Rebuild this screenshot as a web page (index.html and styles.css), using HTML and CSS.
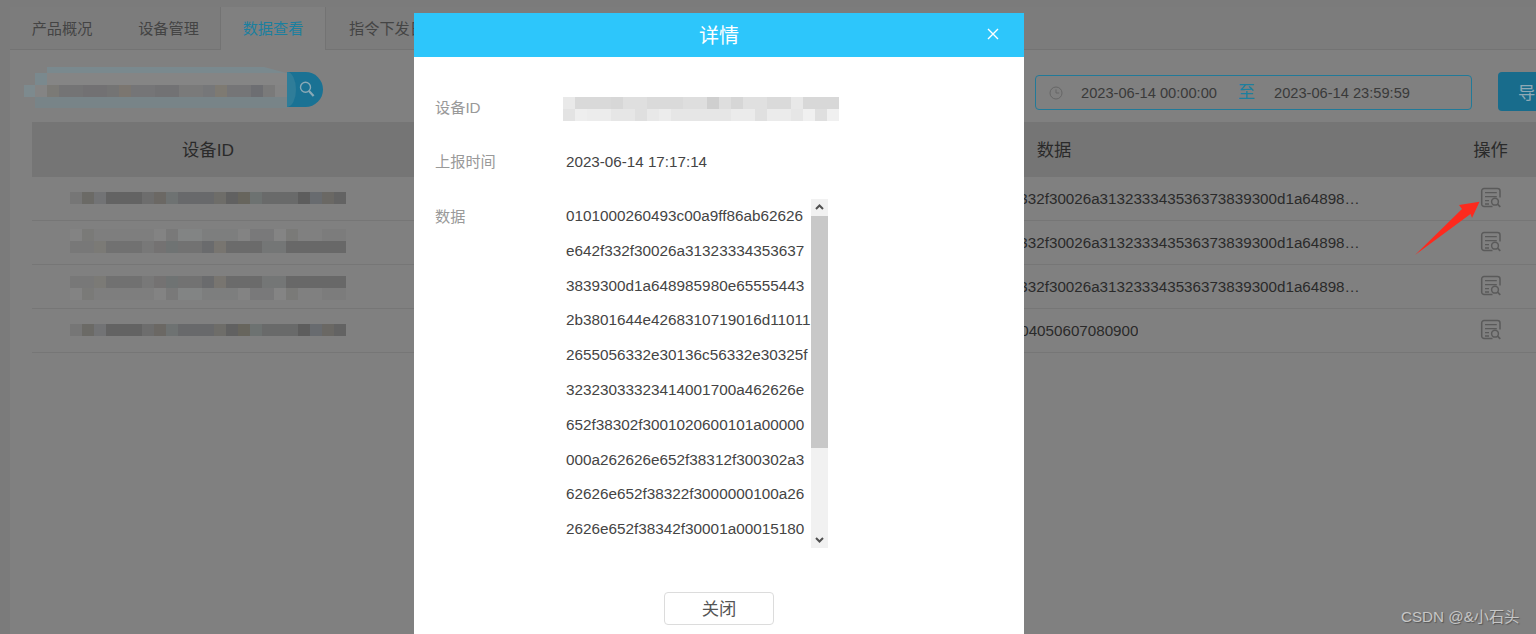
FILE: index.html
```html
<!DOCTYPE html>
<html lang="zh-CN">
<head>
<meta charset="utf-8">
<title>数据查看</title>
<link rel="stylesheet" href="styles.css">
</head>
<body>
<svg class="defs" width="0" height="0" aria-hidden="true">
  <symbol id="icon-view" viewBox="0 0 22 22">
    <path d="M20 10.5V4a2.4 2.4 0 0 0-2.4-2.4H4.1A2.4 2.4 0 0 0 1.7 4v13a2.4 2.4 0 0 0 2.4 2.4h8.4" fill="none" stroke="currentColor" stroke-width="1.5"/>
    <path d="M5 5.7h11.8M5 9.7h11.8M5 13.7h4M5 17h4" fill="none" stroke="currentColor" stroke-width="1.3"/>
    <circle cx="15" cy="14.7" r="3.4" fill="none" stroke="currentColor" stroke-width="1.5"/>
    <path d="M17.5 17.2l2.8 2.7" fill="none" stroke="currentColor" stroke-width="1.7"/>
  </symbol>
</svg>

<main class="page">
  <nav class="tabs">
    <a class="tab">产品概况</a>
    <a class="tab">设备管理</a>
    <a class="tab tab-active">数据查看</a>
    <a class="tab tab-last">指令下发日志</a>
  </nav>

  <section class="toolbar">
    <div class="search">
      <div class="search-field">
        <span class="mosaic-search"></span>
      </div>
      <button class="search-btn" aria-label="搜索">
        <svg width="20" height="20" viewBox="0 0 20 20"><circle cx="8.5" cy="8.2" r="5" fill="none" stroke="#8aa9b6" stroke-width="1.4"/><path d="M12 12l4.6 5" stroke="#8aa9b6" stroke-width="2.2"/></svg>
      </button>
    </div>
    <div class="range">
      <svg class="clock" width="14" height="14" viewBox="0 0 14 14"><circle cx="7" cy="7" r="6" fill="none" stroke="#666" stroke-width="1"/><path d="M7 3.4V7h3.2" fill="none" stroke="#666" stroke-width="1"/></svg>
      <span class="range-date">2023-06-14 00:00:00</span>
      <span class="range-to">至</span>
      <span class="range-date">2023-06-14 23:59:59</span>
    </div>
    <button class="export">导出</button>
  </section>

  <section class="table">
    <div class="thead">
      <div class="cell">设备ID</div>
      <div class="cell"></div>
      <div class="cell">数据</div>
      <div class="cell">操作</div>
    </div>
    <div class="row">
      <div class="cell"><span class="mosaic"><i class="m-dark"></i></span></div>
      <div class="cell"></div>
      <div class="cell data"><span class="clip">0101000260493c00a9ff86ab62626e642f332f30026a313233343536373839300d1a648985980e65555443</span></div>
      <div class="cell"><svg class="view"><use href="#icon-view"/></svg></div>
    </div>
    <div class="row">
      <div class="cell"><span class="mosaic mosaic-up"><i class="m-light"></i><i class="m-mid"></i></span></div>
      <div class="cell"></div>
      <div class="cell data"><span class="clip">0101000260493c00a9ff86ab62626e642f332f30026a313233343536373839300d1a648985980e65555443</span></div>
      <div class="cell"><svg class="view"><use href="#icon-view"/></svg></div>
    </div>
    <div class="row">
      <div class="cell"><span class="mosaic mosaic-down"><i class="m-mid"></i><i class="m-light"></i></span></div>
      <div class="cell"></div>
      <div class="cell data"><span class="clip">0101000260493c00a9ff86ab62626e642f332f30026a313233343536373839300d1a648985980e65555443</span></div>
      <div class="cell"><svg class="view"><use href="#icon-view"/></svg></div>
    </div>
    <div class="row">
      <div class="cell"><span class="mosaic"><i class="m-dark"></i></span></div>
      <div class="cell"></div>
      <div class="cell data"><span class="clip">01020304050607080900</span></div>
      <div class="cell"><svg class="view"><use href="#icon-view"/></svg></div>
    </div>
  </section>
</main>

<svg class="arrow" width="70" height="58" viewBox="0 0 70 58" aria-hidden="true">
  <polygon points="1,55 48,9 45,5 65.5,1.7 58,18 56.5,14" fill="#fc2a1e"/>
</svg>

<section class="modal" role="dialog">
  <header class="modal-head">
    <h2 class="modal-title">详情</h2>
    <svg class="modal-close" width="12" height="12" viewBox="0 0 12 12"><path d="M1 1l10 10M11 1L1 11" stroke="#fff" stroke-width="1.4"/></svg>
  </header>
  <div class="modal-body">
    <div class="field">
      <span class="field-label">设备ID</span>
      <span class="field-mosaic"></span>
    </div>
    <div class="field">
      <span class="field-label">上报时间</span>
      <span class="field-value">2023-06-14 17:17:14</span>
    </div>
    <div class="field field-data">
      <span class="field-label">数据</span>
      <div class="data-box">
        <div class="data-lines">
          <p>0101000260493c00a9ff86ab62626</p>
          <p>e642f332f30026a31323334353637</p>
          <p>3839300d1a648985980e65555443</p>
          <p>2b3801644e4268310719016d11011</p>
          <p>2655056332e30136c56332e30325f</p>
          <p>32323033323414001700a462626e</p>
          <p>652f38302f3001020600101a00000</p>
          <p>000a262626e652f38312f300302a3</p>
          <p>62626e652f38322f3000000100a26</p>
          <p>2626e652f38342f30001a00015180</p>
        </div>
        <div class="scrollbar">
          <svg class="sb-arrow" width="17" height="17" viewBox="0 0 17 17"><path d="M5 10l3.5-3.5L12 10" fill="none" stroke="#505050" stroke-width="2"/></svg>
          <div class="sb-track"><div class="sb-thumb"></div></div>
          <svg class="sb-arrow" width="17" height="17" viewBox="0 0 17 17"><path d="M5 7l3.5 3.5L12 7" fill="none" stroke="#505050" stroke-width="2"/></svg>
        </div>
      </div>
    </div>
    <div class="modal-foot"><button class="close-btn">关闭</button></div>
  </div>
</section>

<div class="watermark">CSDN @&amp;小石头</div>
</body>
</html>
```

FILE: styles.css
```css
* { box-sizing: border-box; }
html, body { margin: 0; height: 634px; overflow: hidden; }
body {
  background: #7b7b7b;
  color: #2a2a2a;
  font: 15.2px "Liberation Sans", "Noto Sans CJK SC", sans-serif;
  position: relative;
}
.defs { position: absolute; }

.page { margin-left: 10px; padding-top: 7px; height: 634px; background: linear-gradient(#7b7b7b 0 7px, #808080 7px); }

.tabs { display: flex; height: 43px; background: #7c7c7c; border-bottom: 1px solid #737373; }
.tab { flex: none; width: 106px; height: 43px; line-height: 43px; text-align: center; font-size: 15.2px; color: #444; white-space: nowrap; }
.tab:first-child { width: 104px; }
.tab:nth-child(2) { padding-left: 3px; }
.tab-active { background: #808080; color: #1c7f9f; border-left: 1px solid #737373; border-right: 1px solid #737373; }
.tab-last { width: auto; padding-left: 23px; border-left: 0; }

.toolbar { display: flex; align-items: flex-start; height: 72px; padding-top: 16px; }
.search { display: flex; align-items: flex-start; flex: none; width: 299px; height: 42px; margin-left: 14px; }
.search-field {
  position: relative; flex: none; width: 264px; height: 42px;
  background:
    linear-gradient(#7a898e, #7a898e) 11px 7px / 12px 12px no-repeat,
    linear-gradient(#7d8a8e, #7d8a8e) 0 19px / 11px 12px no-repeat,
    linear-gradient(#808080 0 1px, #7a898e 1px 7px, #858585 7px 19px, #848484 19px 31px, #788488 31px 42px);
  clip-path: polygon(0 19px, 11px 19px, 11px 7px, 23px 7px, 23px 1px, 240px 1px, 262px 7px, 264px 7px, 264px 42px, 11px 42px, 11px 31px, 0 31px);
}
.mosaic-search {
  display: block; position: absolute; left: 23px; top: 19px; width: 228px; height: 12px;
  background: linear-gradient(90deg, #7b7a76 0 12px, #747475 12px 36px, #727173 36px 60px, #747474 60px 72px, #7b7670 72px 84px, #757577 84px 108px, #727274 108px 132px, #7a7a7a 132px 156px, #767779 156px 168px, #7e7a72 168px 180px, #757577 180px 204px, #6d6e72 204px 216px, #7a7a7a 216px 228px);
}
.search-btn {
  position: relative; flex: none; width: 36px; height: 35px; margin-left: -1px; margin-top: 6px; padding: 0 0 2px 4px; border: 0;
  background: #1a7294; border-radius: 0 18px 18px 0;
  display: flex; align-items: center; justify-content: center;
}
.search-btn::before {
  content: ""; position: absolute; left: 0; top: 0; width: 9px; height: 35px;
  background: #2f7d99; border-radius: 0 9px 9px 0 / 0 18px 18px 0;
}
.range {
  display: flex; align-items: center; flex: none; width: 437px; height: 35px; margin-left: 712px; margin-top: 9px;
  border: 1px solid #217a99; border-radius: 4px; color: #3a3a3a; padding-left: 13px; font-size: 14.65px;
}
.clock { margin-right: 18px; flex: none; }
.range-date { white-space: nowrap; width: 137px; }
.range-to { color: #1c7f9f; font-size: 17px; margin: 0 19px 0 20px; line-height: 1; }
.export {
  flex: none; width: 60px; height: 39px; margin-left: 26px; margin-top: 6px; border: 0; background: #186c8c; border-radius: 4px 0 0 4px;
  color: #8fa9b5; font: 17.3px "Liberation Sans", "Noto Sans CJK SC", sans-serif; text-align: left; padding-left: 20px; white-space: nowrap; overflow: hidden;
}

.table { margin-left: 22px; }
.thead, .row { display: grid; grid-template-columns: 352px 279px 782px 91px; }
.thead { height: 55px; background: #757575; font-size: 17.3px; }
.thead .cell { padding-bottom: 3px; }
.row { height: 44px; border-bottom: 1px solid #767676; }
.cell { display: flex; align-items: center; justify-content: center; min-width: 0; }
.data { padding: 0 83px; }
.clip { display: block; max-width: 100%; overflow: hidden; white-space: nowrap; text-overflow: ellipsis; }
.view { width: 22px; height: 22px; color: #5a5a5a; margin-top: -1px; }

.mosaic { display: flex; flex-direction: column; width: 276px; margin-top: -1px; }
.mosaic-up { margin-top: -3px; }
.mosaic-down { margin-top: 3px; }
.mosaic i { display: block; height: 12px; }
.m-dark { background: linear-gradient(90deg, #767676 0 12px, #6b6a66 12px 24px, #727375 24px 36px, #636363 36px 72px, #6d6d6d 72px 84px, #6b6864 84px 96px, #6e7272 96px 108px, #68696b 108px 144px, #6e6d69 144px 156px, #616161 156px 168px, #67655d 168px 180px, #6d7271 180px 192px, #696a6a 192px 228px, #5d5d5d 228px 240px, #686b6f 240px 252px, #6a6864 252px 264px, #636363 264px 276px); }
.m-mid { background: linear-gradient(90deg, #787878 0 24px, #7b7a76 24px 36px, #717171 36px 72px, #787878 72px 84px, #747272 84px 96px, #6f7373 96px 108px, #727272 108px 132px, #6a6b6d 132px 144px, #787570 144px 156px, #6b6b6b 156px 192px, #747676 192px 216px, #686868 216px 276px); }
.m-light { background: linear-gradient(90deg, #838383 0 12px, #7a7a78 12px 24px, #7e7e7e 24px 84px, #838383 84px 96px, #797979 96px 108px, #828484 108px 132px, #7d7e7e 132px 168px, #838383 168px 180px, #79797a 180px 204px, #848484 204px 216px, #7a7a78 216px 228px, #808080 228px 252px, #7c7c7c 252px 276px); }

.arrow { position: absolute; left: 1414px; top: 200px; }

.modal { position: absolute; left: 414px; top: 13px; width: 610px; height: 640px; background: #fff; font-size: 15.2px; }
.modal-head { position: relative; height: 44px; padding-bottom: 2px; background: #2dc6fb; display: flex; align-items: center; justify-content: center; }
.modal-title { margin: 0; font-size: 20px; font-weight: 400; color: #fff; }
.modal-close { position: absolute; left: 573px; top: 15px; }
.modal-body { padding: 40px 0 0 21px; color: #444; }
.field { display: flex; align-items: center; height: 20px; margin-bottom: 34px; }
.field-label { width: 131px; margin-top: -2px; color: #999; flex: none; white-space: nowrap; }
.field-mosaic {
  display: block; width: 276px; height: 24px; margin: 4px 0 0 -3px;
  background:
    linear-gradient(90deg, #e9e9e9 0 12px, #d9d9d9 12px 48px, #d7d7d7 48px 60px, #dfdfdf 60px 84px, #dadada 84px 120px, #dedede 120px 144px, #cfcfcf 144px 156px, #dedede 156px 168px, #d6d6d6 168px 180px, #e0e0e0 180px 204px, #dadada 204px 228px, #e8e8e8 228px 240px, #d8d8d8 240px 276px) top / 100% 12px no-repeat,
    linear-gradient(90deg, #e3e3e3 0 12px, #eeeeee 12px 24px, #ececec 24px 48px, #e6e6e6 48px 72px, #dfdfdf 72px 84px, #e8e8e8 84px 96px, #ececec 96px 108px, #e6e6e6 108px 168px, #ebebeb 168px 192px, #e0e0e0 192px 204px, #ebebeb 204px 228px, #e6e6e6 228px 240px, #f0f0f0 240px 252px, #dfdfdf 252px 264px, #f0f0f0 264px 276px) bottom / 100% 12px no-repeat;
}
.field-value { color: #444; white-space: nowrap; }
.field-data { align-items: flex-start; height: 349px; margin-top: -6px; margin-bottom: 44px; }
.field-data .field-label { margin-top: 0; padding-top: 5px; }
.data-box { display: flex; height: 349px; }
.data-lines { width: 245px; white-space: nowrap; font-size: 15.3px; }
.data-lines p { margin: 0; height: 34.8px; line-height: 34.8px; }
.scrollbar { display: flex; flex-direction: column; width: 17px; height: 349px; background: #f1f1f1; }
.sb-arrow { flex: none; }
.sb-track { flex: 1; }
.sb-thumb { height: 232px; background: #c8c8c8; }

.modal-foot { display: flex; justify-content: center; margin-left: -21px; }
.close-btn {
  width: 110px; height: 33px; padding: 0 0 3px; background: #fff; border: 1px solid #dcdcdc; border-radius: 4px; color: #555;
  font: 17.3px "Liberation Sans", "Noto Sans CJK SC", sans-serif;
}

.watermark { position: absolute; left: 1401px; top: 604px; font-size: 15.2px; color: #c6c6c6; text-shadow: 1px 1px 1px #555; white-space: nowrap; }
```
